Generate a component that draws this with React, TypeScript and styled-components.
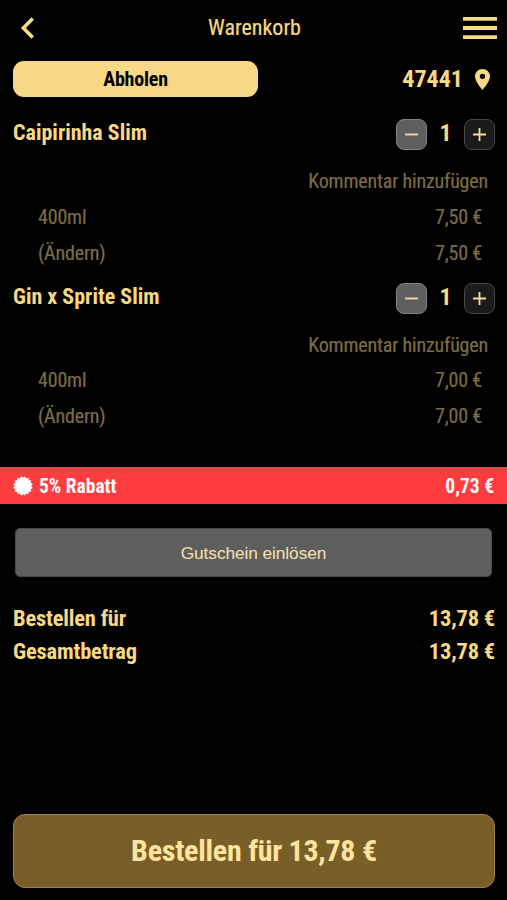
import React from "react";
import styled, { createGlobalStyle } from "styled-components";

const gold = "#f7d985";

const Global = createGlobalStyle`
  * { box-sizing: border-box; }
  body { margin: 0; background: #000; }
`;

const Screen = styled.main`
  display: flex;
  flex-direction: column;
  width: 507px;
  height: 900px;
  overflow: hidden;
  background: #000;
  color: ${gold};
  font-family: "Roboto Condensed", Roboto, sans-serif;
  font-stretch: 75%;
`;

const Header = styled.header`
  display: grid;
  grid-template-columns: 1fr auto 1fr;
  align-items: center;
  height: 61px;
  padding: 0 10px 5px 20px;
`;

const Title = styled.h1`
  margin: 0 -1px 0 -9px;
  font-size: 22px;
  line-height: 26px;
  font-weight: 400;
  -webkit-text-stroke: 0.2px currentColor;
`;

const IconButton = styled.button<{ $end?: boolean }>`
  display: flex;
  justify-self: ${(p) => (p.$end ? "end" : "start")};
  padding: 0;
  border: 0;
  background: none;
  color: inherit;
`;

const PickupRow = styled.div`
  display: flex;
  justify-content: space-between;
  height: 36px;
  margin: 0 17px 0 13px;
`;

const PickupButton = styled.button`
  width: 245px;
  padding: 0;
  border: 0;
  border-radius: 11px;
  background: ${gold};
  color: #000;
  font: inherit;
  font-size: 20px;
  font-weight: 700;
  letter-spacing: -0.2px;
`;

const Location = styled.div`
  display: flex;
  align-items: center;
  gap: 12px;
  font-size: 24px;
  font-weight: 700;
`;

const Items = styled.section`
  display: flex;
  flex-direction: column;
  height: 370px;
  padding-top: 22px;
`;

const Item = styled.article`
  height: 163.6px;
`;

const ItemHead = styled.div`
  display: flex;
  justify-content: space-between;
  height: 44px;
  padding: 0 12px 0 13px;
`;

const ItemName = styled.h2`
  margin: 0;
  font-size: 22px;
  line-height: 27px;
  font-weight: 700;
`;

const Stepper = styled.div`
  display: grid;
  grid-template-columns: 31px 37px 31px;
  height: 31px;
  align-items: center;
  text-align: center;
  font-size: 24px;
  line-height: 29px;
  font-weight: 700;
`;

const Quantity = styled.span`
  padding-bottom: 2px;
`;

const StepButton = styled.button<{ $filled?: boolean }>`
  display: flex;
  align-items: center;
  justify-content: center;
  height: 31px;
  padding: 0;
  border: 1px solid ${(p) => (p.$filled ? "#828282" : "#484848")};
  border-radius: 8px;
  background: ${(p) => (p.$filled ? "#5e5e5e" : "#1b1b1b")};
  color: #f8dfa0;
`;

const Detail = styled.div<{ $comment?: boolean }>`
  display: flex;
  justify-content: ${(p) => (p.$comment ? "flex-end" : "space-between")};
  padding: 0 ${(p) => (p.$comment ? 19 : 25)}px 0 38px;
  font-size: 20px;
  line-height: 36px;
  height: 35.8px;
  color: #7c6c42;
  letter-spacing: -0.18px;
  -webkit-text-stroke: 0.2px currentColor;
`;

const Discount = styled.div`
  display: flex;
  align-items: center;
  height: 37px;
  padding: 1px 13px 0;
  background: #ff3d3e;
  color: #fff;
  font-size: 19.5px;
  font-weight: 700;
`;

const DiscountLabel = styled.span`
  flex: 1;
  margin-left: 6px;
`;

const Voucher = styled.button`
  height: 49px;
  margin: 24px 15px 25px 15px;
  padding: 1px 0 0;
  border: 1px solid #494949;
  border-radius: 5px;
  background: #5e5e5e;
  color: #f5e2ab;
  font-family: "Liberation Sans", Arial, sans-serif;
  font-size: 17.3px;
  letter-spacing: -0.08px;
`;

const Total = styled.div`
  display: flex;
  justify-content: space-between;
  padding: 0 12px 0 13px;
  font-size: 22.5px;
  font-weight: 700;
  line-height: 33px;
  letter-spacing: -0.2px;
`;

const OrderButton = styled.button`
  height: 74px;
  margin: auto 12px 12px 13px;
  padding: 0 0 2px;
  border: 1px solid #a18144;
  border-radius: 12px;
  background: #7a5e27;
  color: #ffe4a0;
  font: inherit;
  font-size: 30px;
  font-weight: 700;
  letter-spacing: -0.25px;
`;

const BackIcon = () => (
  <svg width="15" height="22" viewBox="0 0 15 22" fill="none" stroke={gold} strokeWidth="3.6">
    <path d="M12.7 1.4 3.4 11l9.3 9.6" />
  </svg>
);

const MenuIcon = () => (
  <svg width="34" height="24" viewBox="0 0 34 24" fill={gold}>
    <path d="M0 1h34v3.8H0zM0 10.1h34v3.8H0zM0 19.2h34V23H0z" />
  </svg>
);

const PinIcon = () => (
  <svg width="15" height="21" viewBox="5 2 14 20" preserveAspectRatio="none" fill={gold}>
    <path d="M12 2C8.13 2 5 5.13 5 9c0 5.25 7 13 7 13s7-7.75 7-13c0-3.87-3.13-7-7-7zm0 9.5A2.5 2.5 0 1 1 12 6.5a2.5 2.5 0 0 1 0 5z" />
  </svg>
);

const StepIcon = ({ plus = false }: { plus?: boolean }) => (
  <svg width="15" height="15" viewBox="0 0 15 15" fill="none" stroke="currentColor" strokeWidth="1.8">
    <path d={plus ? "M1 7.5h13M7.5 1v13" : "M1 7.5h13"} />
  </svg>
);

const sealPoints = Array.from({ length: 32 }, (_, i) => {
  const r = i % 2 ? 8.2 : 10;
  const a = ((i + 1) * Math.PI) / 16;
  return `${(10 + r * Math.cos(a)).toFixed(2)},${(10 + r * Math.sin(a)).toFixed(2)}`;
}).join(" ");

const SealIcon = () => (
  <svg width="20" height="20" viewBox="0 0 20 20" fill="#fff">
    <polygon points={sealPoints} />
  </svg>
);

const items = [
  { name: "Caipirinha Slim", size: "400ml", price: "7,50 €" },
  { name: "Gin x Sprite Slim", size: "400ml", price: "7,00 €" },
];

export default function App() {
  return (
    <Screen>
      <Global />
      <Header>
        <IconButton aria-label="Zurück"><BackIcon /></IconButton>
        <Title>Warenkorb</Title>
        <IconButton $end aria-label="Menü"><MenuIcon /></IconButton>
      </Header>
      <PickupRow>
        <PickupButton>Abholen</PickupButton>
        <Location><span>47441</span><PinIcon /></Location>
      </PickupRow>
      <Items>
        {items.map((item) => (
          <Item key={item.name}>
            <ItemHead>
              <ItemName>{item.name}</ItemName>
              <Stepper>
                <StepButton $filled aria-label="Weniger"><StepIcon /></StepButton>
                <Quantity>1</Quantity>
                <StepButton aria-label="Mehr"><StepIcon plus /></StepButton>
              </Stepper>
            </ItemHead>
            <Detail $comment><span>Kommentar hinzufügen</span></Detail>
            <Detail><span>{item.size}</span><span>{item.price}</span></Detail>
            <Detail><span>(Ändern)</span><span>{item.price}</span></Detail>
          </Item>
        ))}
      </Items>
      <Discount>
        <SealIcon />
        <DiscountLabel>5% Rabatt</DiscountLabel>
        <span>0,73 €</span>
      </Discount>
      <Voucher>Gutschein einlösen</Voucher>
      <Total><span>Bestellen für</span><span>13,78 €</span></Total>
      <Total><span>Gesamtbetrag</span><span>13,78 €</span></Total>
      <OrderButton>Bestellen für 13,78 €</OrderButton>
    </Screen>
  );
}
